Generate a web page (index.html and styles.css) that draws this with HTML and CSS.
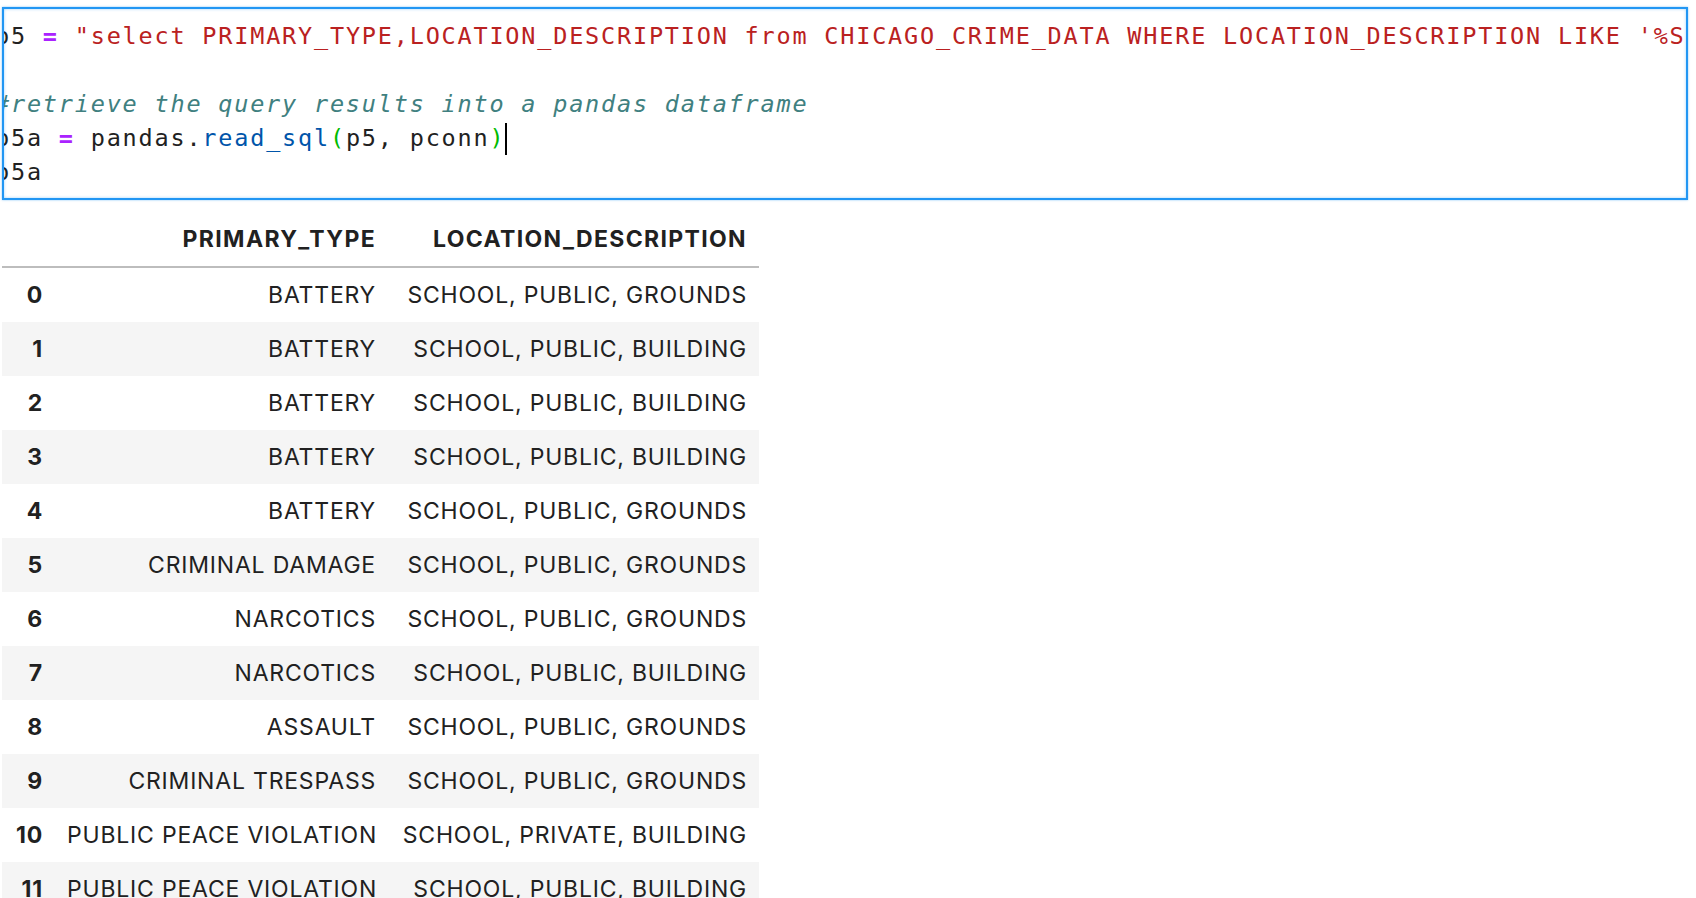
FILE: index.html
```html
<!DOCTYPE html>
<html lang="en">
<head>
<meta charset="utf-8">
<title>Notebook cell</title>
<link rel="stylesheet" href="styles.css">
</head>
<body>
<div class="cell">
  <div class="editor">
    <div class="code">
      <div class="line">p5 <span class="op">=</span> <span class="str">"select PRIMARY_TYPE,LOCATION_DESCRIPTION from CHICAGO_CRIME_DATA WHERE LOCATION_DESCRIPTION LIKE '%SCHOOL%'"</span></div>
      <div class="line"> </div>
      <div class="line"><span class="cmt">#retrieve the query results into a pandas dataframe</span></div>
      <div class="line">p5a <span class="op">=</span> pandas.<span class="prop">read_sql</span><span class="brk">(</span>p5, pconn<span class="brk">)</span><span class="cursor"></span></div>
      <div class="line">p5a</div>
    </div>
  </div>
  <div class="output">
    <table class="df">
      <colgroup>
        <col class="c-idx">
        <col class="c-type">
        <col class="c-loc">
      </colgroup>
      <thead>
        <tr><th></th><th>PRIMARY_TYPE</th><th>LOCATION_DESCRIPTION</th></tr>
      </thead>
      <tbody>
        <tr><th>0</th><td>BATTERY</td><td>SCHOOL, PUBLIC, GROUNDS</td></tr>
        <tr><th>1</th><td>BATTERY</td><td>SCHOOL, PUBLIC, BUILDING</td></tr>
        <tr><th>2</th><td>BATTERY</td><td>SCHOOL, PUBLIC, BUILDING</td></tr>
        <tr><th>3</th><td>BATTERY</td><td>SCHOOL, PUBLIC, BUILDING</td></tr>
        <tr><th>4</th><td>BATTERY</td><td>SCHOOL, PUBLIC, GROUNDS</td></tr>
        <tr><th>5</th><td>CRIMINAL DAMAGE</td><td>SCHOOL, PUBLIC, GROUNDS</td></tr>
        <tr><th>6</th><td>NARCOTICS</td><td>SCHOOL, PUBLIC, GROUNDS</td></tr>
        <tr><th>7</th><td>NARCOTICS</td><td>SCHOOL, PUBLIC, BUILDING</td></tr>
        <tr><th>8</th><td>ASSAULT</td><td>SCHOOL, PUBLIC, GROUNDS</td></tr>
        <tr><th>9</th><td>CRIMINAL TRESPASS</td><td>SCHOOL, PUBLIC, GROUNDS</td></tr>
        <tr><th>10</th><td>PUBLIC PEACE VIOLATION</td><td>SCHOOL, PRIVATE, BUILDING</td></tr>
        <tr><th>11</th><td>PUBLIC PEACE VIOLATION</td><td>SCHOOL, PUBLIC, BUILDING</td></tr>
      </tbody>
    </table>
  </div>
</div>
</body>
</html>
```

FILE: styles.css
```css
html, body {
  margin: 0;
  padding: 0;
  background: #ffffff;
}

body {
  overflow: hidden;
  height: 898px;
}

.editor {
  box-sizing: border-box;
  height: 193px;
  margin: 7px 8px 0 2px;
  padding-top: 10px;
  border: 2px solid #2196f3;
  box-shadow: 0 0 2px rgba(33, 150, 243, 0.55), inset 0 0 3px rgba(33, 150, 243, 0.45);
  overflow: hidden;
  background: #ffffff;
}

.code {
  margin-left: -9px;
  font-family: "DejaVu Sans Mono", monospace;
  font-size: 23.5px;
  letter-spacing: 1.8px;
  color: #212121;
}

.line {
  height: 34px;
  line-height: 34px;
  white-space: pre;
}

.op {
  color: #aa22ff;
  font-weight: bold;
}

.str {
  color: #ba2121;
}

.cmt {
  color: #408080;
  font-style: italic;
}

.prop {
  color: #0055aa;
}

.brk {
  color: #00bb00;
}

.cursor {
  display: inline-block;
  width: 0;
  height: 32px;
  margin-top: 2px;
  border-left: 2px solid #000000;
  vertical-align: top;
}

.output {
  margin: 12px 0 0 2px;
}

.df {
  border-collapse: collapse;
  table-layout: fixed;
  width: 757px;
  font-family: Inter, "Noto Sans", sans-serif;
  font-size: 23px;
  letter-spacing: 0.8px;
  color: #212121;
}

.c-idx { width: 53px; }
.c-type { width: 333px; }
.c-loc { width: 371px; }

.df th,
.df td {
  padding: 13px 12px;
  line-height: 28px;
  text-align: right;
  white-space: nowrap;
}

.df thead th {
  font-weight: 700;
  letter-spacing: 1.35px;
  border-bottom: 2px solid #bdbdbd;
}

.df tbody th {
  font-weight: 700;
}

.df tbody tr:nth-child(even) {
  background: #f5f5f5;
}
```
